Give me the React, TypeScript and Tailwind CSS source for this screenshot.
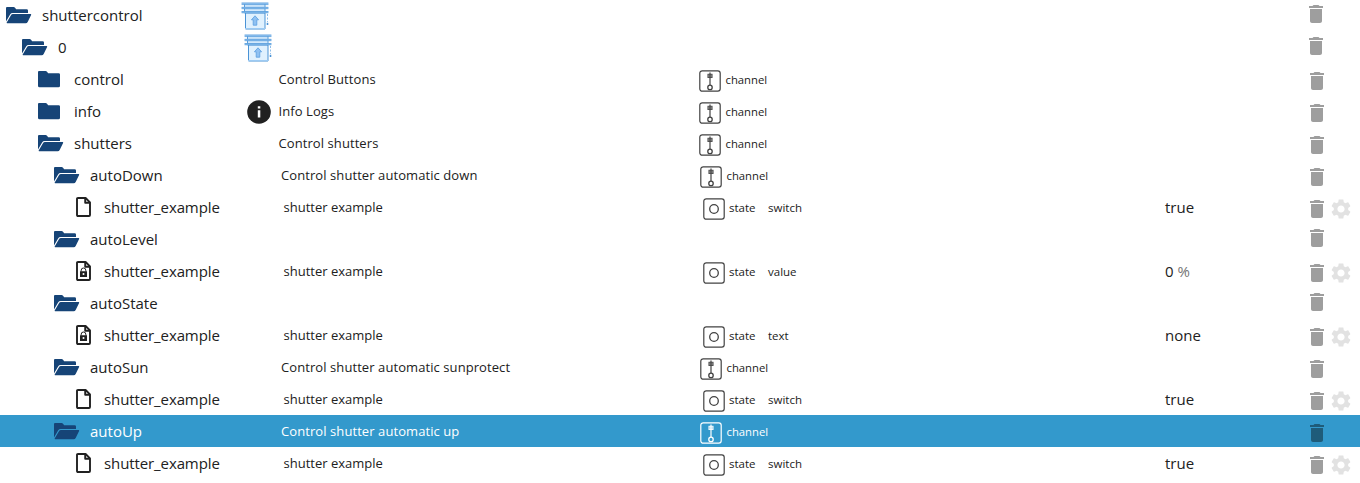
import React from "react";

type Kind = "folder" | "open" | "file" | "locked";

interface Item {
  id: string;
  depth: 0 | 1 | 2 | 3 | 4;
  kind: Kind;
  icon?: "shutter" | "info";
  desc?: string;
  type?: "channel" | "state";
  role?: string;
  value?: string;
  unit?: string;
  selected?: boolean;
}

const items: Item[] = [
  { id: "shuttercontrol", depth: 0, kind: "open", icon: "shutter" },
  { id: "0", depth: 1, kind: "open", icon: "shutter" },
  { id: "control", depth: 2, kind: "folder", desc: "Control Buttons", type: "channel" },
  { id: "info", depth: 2, kind: "folder", icon: "info", desc: "Info Logs", type: "channel" },
  { id: "shutters", depth: 2, kind: "open", desc: "Control shutters", type: "channel" },
  { id: "autoDown", depth: 3, kind: "open", desc: "Control shutter automatic down", type: "channel" },
  { id: "shutter_example", depth: 4, kind: "file", desc: "shutter example", type: "state", role: "switch", value: "true" },
  { id: "autoLevel", depth: 3, kind: "open" },
  { id: "shutter_example", depth: 4, kind: "locked", desc: "shutter example", type: "state", role: "value", value: "0", unit: "%" },
  { id: "autoState", depth: 3, kind: "open" },
  { id: "shutter_example", depth: 4, kind: "locked", desc: "shutter example", type: "state", role: "text", value: "none" },
  { id: "autoSun", depth: 3, kind: "open", desc: "Control shutter automatic sunprotect", type: "channel" },
  { id: "shutter_example", depth: 4, kind: "file", desc: "shutter example", type: "state", role: "switch", value: "true" },
  { id: "autoUp", depth: 3, kind: "open", desc: "Control shutter automatic up", type: "channel", selected: true },
  { id: "shutter_example", depth: 4, kind: "file", desc: "shutter example", type: "state", role: "switch", value: "true" },
];

const nameIndent = ["pl-[6px]", "pl-[22px]", "pl-[38px]", "pl-[54px]", "pl-[68px]"];
const descIndent = ["pl-0", "pl-[3px]", "pl-[5.5px]", "pl-[8px]", "pl-[10.5px]"];
const typeIndent = ["pl-0", "pl-0", "pl-0", "pl-px", "pl-[4px]"];

function TreeIcon({ kind }: { kind: Kind }) {
  if (kind === "open")
    return (
      <svg width="26" height="18" viewBox="0 0 26 18" fill="#164477">
        <path d="M0 1Q0 0 1 0H7.6Q8.3 0 8.8 .6L10.2 2.2H20.6Q22 2.2 22 3.6V6H6.6Q5 6 4.1 7.4L0 14.4Z" />
        <path d="M7 7.1H24.6Q25.5 7.1 25.1 7.9L21.8 14.7Q21.1 16.3 19.6 16.3H1.2Q.3 16.3 .7 15.6L4.8 8.4Q5.6 7.1 7 7.1Z" />
      </svg>
    );
  if (kind === "folder")
    return (
      <svg width="26" height="18" viewBox="0 0 26 18" fill="#164477">
        <path d="M0 1Q0 0 1 0H7.6Q8.3 0 8.8 .6L10.2 2.2H20.6Q22 2.2 22 3.6V14.8Q22 16.3 20.5 16.3H1.5Q0 16.3 0 14.8Z" />
      </svg>
    );
  return (
    <svg className="ml-2" width="15" height="20" viewBox="0 0 15 20">
      <path
        d="M2 1H9.6L14 5.4V18Q14 19 13 19H2Q1 19 1 18V2Q1 1 2 1ZM9.2 1V5.8H14"
        fill="none"
        stroke="#212121"
        strokeWidth="1.9"
        strokeLinejoin="round"
      />
      {kind === "locked" && (
        <>
          <path d="M5.2 10.5V9.2Q5.2 7 7.5 7T9.8 9.2V10.5" fill="none" stroke="#212121" strokeWidth="1" />
          <path d="M4 10.2H11V16H4ZM7.5 12A1 1 0 1 0 7.5 14 1 1 0 1 0 7.5 12Z" fill="#212121" fillRule="evenodd" />
        </>
      )}
    </svg>
  );
}

function ShutterIcon() {
  return (
    <svg width="28" height="28" viewBox="0 0 28 28">
      <path d="M3 2H24V12H3Z" fill="#d3e9fc" />
      <path d="M3.5 2V11M24 2V11" stroke="#5b9fdc" />
      <path d="M4.5 11H24V27H4.5Z" fill="#e0f1fe" stroke="#4a93d6" strokeWidth="1" />
      <path d="M4 26.5H24.5" stroke="#9ccaf3" />
      <path d="M.6 .8H27.4V2.6H.6ZM.6 5H27.4V6.8H.6ZM.6 9.2H27.4V11H.6Z" fill="#a2cef6" />
      <path d="M.6 1H27.4M.6 2.6H27.4M.6 5.3H27.4M.6 6.7H27.4M.6 9.5H27.4M.6 10.8H27.4" stroke="#4a93d6" strokeWidth=".7" />
      <path d="M14 13.8L17.6 17.8H15.8V23.2H12.2V17.8H10.4Z" fill="#8fc1f2" stroke="#5b9ee0" strokeWidth=".8" />
      <path d="M26.5 12V20" stroke="#8dbdea" strokeWidth="1" strokeDasharray="2 1.5" />
      <path d="M25.7 20.8H27.3V23H25.7Z" fill="#4a93d6" />
    </svg>
  );
}

function InfoIcon() {
  return (
    <svg className="ml-[0.5px]" width="24" height="24" viewBox="0 0 24 24">
      <circle cx="12" cy="12" r="11.8" fill="#212121" />
      <path d="M10.8 6.2H13.3V8.5H10.8ZM10.8 10.2H13.3V17.6H10.8Z" fill="#fff" />
    </svg>
  );
}

function TypeIcon({ type }: { type: "channel" | "state" }) {
  return (
    <svg width="22" height="22" viewBox="0 0 22 22" fill="none" stroke="currentColor">
      <rect x=".8" y=".8" width="20.4" height="20.4" rx="2.4" strokeWidth="1.2" />
      {type === "channel" ? (
        <>
          <path d="M11 2.4V15" strokeWidth="1.2" />
          <rect x="8.9" y="4.2" width="4.2" height="3.4" fill="currentColor" fillOpacity=".6" strokeWidth=".8" />
          <circle cx="11" cy="17.4" r="2.2" fill="none" strokeWidth="1.3" />
        </>
      ) : (
        <circle cx="11" cy="11" r="4.3" strokeWidth="1.3" />
      )}
    </svg>
  );
}

function TrashIcon() {
  return (
    <svg width="24" height="24" viewBox="0 0 24 24" fill="currentColor">
      <path d="M6 19c0 1.1.9 2 2 2h8c1.1 0 2-.9 2-2V7H6v12zM19 4h-3.5l-1-1h-5l-1 1H5v2h14V4z" />
    </svg>
  );
}

function GearIcon() {
  return (
    <svg width="24" height="24" viewBox="0 0 24 24" fill="#e2e2e2">
      <path d="M19.14 12.94c.04-.3.06-.61.06-.94 0-.32-.02-.64-.07-.94l2.03-1.58c.18-.14.23-.41.12-.61l-1.92-3.32c-.12-.22-.37-.29-.59-.22l-2.39.96c-.5-.38-1.03-.7-1.62-.94l-.36-2.54c-.04-.24-.24-.41-.48-.41h-3.84c-.24 0-.43.17-.47.41l-.36 2.54c-.59.24-1.13.57-1.62.94l-2.39-.96c-.22-.08-.47 0-.59.22L2.74 8.87c-.12.21-.08.47.12.61l2.03 1.58c-.05.3-.09.63-.09.94s.02.64.07.94l-2.03 1.58c-.18.14-.23.41-.12.61l1.92 3.32c.12.22.37.29.59.22l2.39-.96c.5.38 1.03.7 1.62.94l.36 2.54c.05.24.24.41.48.41h3.84c.24 0 .44-.17.47-.41l.36-2.54c.59-.24 1.13-.56 1.62-.94l2.39.96c.22.08.47 0 .59-.22l1.92-3.32c.12-.22.07-.47-.12-.61l-2.01-1.58zM12 15.6c-1.98 0-3.6-1.62-3.6-3.6s1.62-3.6 3.6-3.6 3.6 1.62 3.6 3.6-1.62 3.6-3.6 3.6z" />
    </svg>
  );
}

function Row({ item }: { item: Item }) {
  const tall = Boolean(item.desc);
  return (
    <div className={`flex h-8 w-full shrink-0 whitespace-nowrap ${item.selected ? "bg-[#3399cc] text-white" : "text-[#212121]"}`}>
      <div className={`flex h-8 w-[241px] shrink-0 items-center ${nameIndent[item.depth]}`}>
        <span className={`flex w-9 shrink-0 items-center ${item.depth < 4 ? "pt-[2px]" : ""}`}>
          <TreeIcon kind={item.kind} />
        </span>
        <span className={`text-[15px] leading-8 ${item.depth === 4 ? "tracking-[-0.1px]" : ""}`}>{item.id}</span>
      </div>
      <div className={`flex w-[458px] shrink-0 ${descIndent[item.depth]}`}>
        <span className={`w-8 shrink-0 ${item.icon === "info" ? "pt-[5px]" : "pt-[3px]"}`}>
          {item.icon === "shutter" && <ShutterIcon />}
          {item.icon === "info" && <InfoIcon />}
        </span>
        <span className={`text-[13px] leading-8 ${item.depth < 4 ? "tracking-[0.08px]" : ""}`}>{item.desc}</span>
      </div>
      <div className={`flex w-[466px] shrink-0 ${typeIndent[item.depth]}`}>
        {item.type && (
          <>
            <span className={`shrink-0 pt-[7px] ${item.role ? "w-[26px]" : "w-[26.5px]"} ${item.selected ? "text-white" : "text-[#424242]"}`}>
              <TypeIcon type={item.type} />
            </span>
            <span className={`leading-[33px] ${item.role ? "w-[39px] text-[11.5px]" : "text-[11.3px]"}`}>{item.type}</span>
            <span className="text-[11.5px] leading-[33px]">{item.role}</span>
          </>
        )}
      </div>
      <div className="w-[139px] shrink-0 text-[15px] leading-8">
        {item.value}
        {item.unit && <span className="text-[#757575]"> {item.unit}</span>}
      </div>
      <div className={`flex ${item.depth > 1 ? "pl-px" : ""} ${tall ? "pt-[6px]" : "pt-[3px]"}`}>
        <span className={item.selected ? "text-[#1f5c7a]" : "text-[#9e9e9e]"}>
          <TrashIcon />
        </span>
        {item.value && <GearIcon />}
      </div>
    </div>
  );
}

export default function App() {
  return (
    <div className="h-[483px] w-[1360px] overflow-hidden bg-white font-['Open_Sans','Noto_Sans',sans-serif]">
      <div className="-mt-px flex flex-col">
        {items.map((item, i) => (
          <Row key={i} item={item} />
        ))}
      </div>
    </div>
  );
}
